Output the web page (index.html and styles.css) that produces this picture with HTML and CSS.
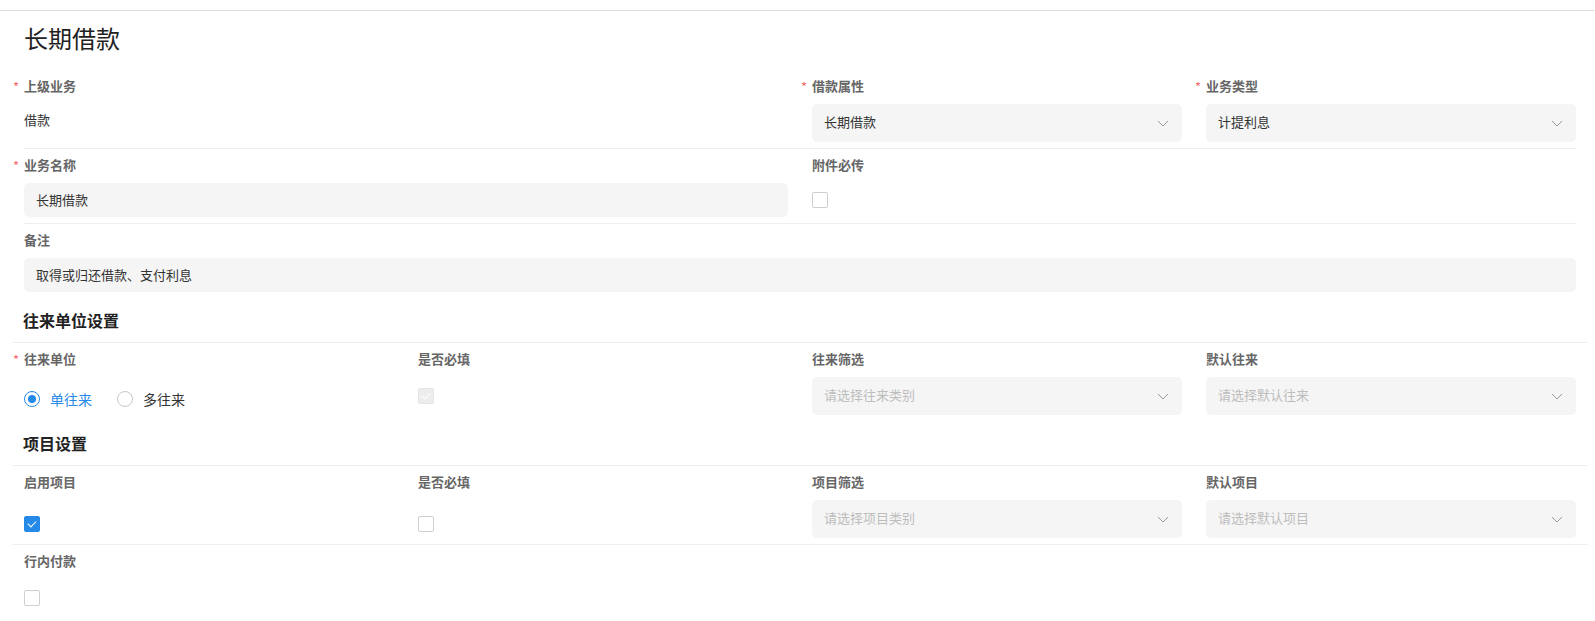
FILE: index.html
```html
<!DOCTYPE html>
<html lang="zh-CN">
<head>
	<meta charset="UTF-8">
	<title>长期借款</title>
	<link rel="stylesheet" href="styles.css">
</head>
<body>
	<div class="page">
		<div class="title">长期借款</div>

		<div class="base">
			<div class="row">
				<div class="item span-2">
					<div class="label required">上级业务</div>
					<div class="text-value">借款</div>
				</div>
				<div class="item">
					<div class="label required">借款属性</div>
					<div class="select">
						<span>长期借款</span>
						<svg class="arrow" width="12" height="7" viewBox="0 0 12 7"><polyline points="1,1 6,6 11,1"/></svg>
					</div>
				</div>
				<div class="item">
					<div class="label required">业务类型</div>
					<div class="select">
						<span>计提利息</span>
						<svg class="arrow" width="12" height="7" viewBox="0 0 12 7"><polyline points="1,1 6,6 11,1"/></svg>
					</div>
				</div>
			</div>
			<div class="row">
				<div class="item span-2">
					<div class="label required">业务名称</div>
					<div class="input">长期借款</div>
				</div>
				<div class="item">
					<div class="label">附件必传</div>
					<div class="check-box short"><span class="check"></span></div>
				</div>
			</div>
			<div class="row no-line">
				<div class="item span-4">
					<div class="label">备注</div>
					<div class="input">取得或归还借款、支付利息</div>
				</div>
			</div>
		</div>

		<div class="section">
			<div class="section-title">往来单位设置</div>
			<div class="row no-line">
				<div class="item">
					<div class="label required">往来单位</div>
					<div class="radio-group">
						<label class="radio on"><span class="dot"></span>单往来</label>
						<label class="radio"><span class="dot"></span>多往来</label>
					</div>
				</div>
				<div class="item">
					<div class="label">是否必填</div>
					<div class="check-box"><span class="check disabled"></span></div>
				</div>
				<div class="item">
					<div class="label">往来筛选</div>
					<div class="select empty">
						<span>请选择往来类别</span>
						<svg class="arrow" width="12" height="7" viewBox="0 0 12 7"><polyline points="1,1 6,6 11,1"/></svg>
					</div>
				</div>
				<div class="item">
					<div class="label">默认往来</div>
					<div class="select empty">
						<span>请选择默认往来</span>
						<svg class="arrow" width="12" height="7" viewBox="0 0 12 7"><polyline points="1,1 6,6 11,1"/></svg>
					</div>
				</div>
			</div>
		</div>

		<div class="section">
			<div class="section-title">项目设置</div>
			<div class="row">
				<div class="item">
					<div class="label">启用项目</div>
					<div class="check-box low"><span class="check checked"></span></div>
				</div>
				<div class="item">
					<div class="label">是否必填</div>
					<div class="check-box low"><span class="check"></span></div>
				</div>
				<div class="item">
					<div class="label">项目筛选</div>
					<div class="select empty">
						<span>请选择项目类别</span>
						<svg class="arrow" width="12" height="7" viewBox="0 0 12 7"><polyline points="1,1 6,6 11,1"/></svg>
					</div>
				</div>
				<div class="item">
					<div class="label">默认项目</div>
					<div class="select empty">
						<span>请选择默认项目</span>
						<svg class="arrow" width="12" height="7" viewBox="0 0 12 7"><polyline points="1,1 6,6 11,1"/></svg>
					</div>
				</div>
			</div>
			<div class="row no-line">
				<div class="item">
					<div class="label">行内付款</div>
					<div class="check-box"><span class="check"></span></div>
				</div>
			</div>
		</div>
	</div>
</body>
</html>
```

FILE: styles.css
```css
body{
	margin: 0;
	padding-top: 10px;
	background: #fff;
	font-family: "Noto Sans CJK SC", "Noto Sans", sans-serif;
	font-size: 13px;
	color: #333;
}
.page{
	border-top: 1px solid #dedede;
	padding: 0 7px 0 12px;
}
.title{
	padding: 11px 0 0 12px;
	font-size: 24px;
	line-height: 32px;
	color: #222;
}
.base{
	margin: 16px 12px 0;
}
.row{
	display: grid;
	grid-template-columns: repeat(4, 1fr);
	column-gap: 24px;
	padding: 8px 0 6px;
	border-bottom: 1px solid #efefef;
}
.row.no-line{
	border-bottom: none;
}
.section .row{
	padding: 8px 12px 6px;
}
.item{
	min-width: 0;
}
.span-2{
	grid-column: span 2;
}
.span-4{
	grid-column: span 4;
}
.label{
	position: relative;
	height: 20px;
	line-height: 16px;
	margin-bottom: 6px;
	font-weight: bold;
	color: #666;
}
.label.required::before{
	content: "*";
	position: absolute;
	left: -11px;
	top: 1px;
	color: #f56c6c;
	font-weight: normal;
	font-size: 13px;
}
.text-value{
	height: 38px;
	line-height: 32px;
}
.select{
	display: flex;
	align-items: center;
	justify-content: space-between;
	height: 38px;
	padding: 0 13px 0 12px;
	background: #f5f5f5;
	border-radius: 5px;
}
.select span{
	margin-top: -3px;
}
.select.empty span{
	color: #bdbdbd;
}
.arrow polyline{
	fill: none;
	stroke: #9a9a9a;
	stroke-width: 1;
}
.input{
	height: 34px;
	line-height: 34px;
	padding: 0 12px;
	background: #f5f5f5;
	border-radius: 5px;
}
.section-title{
	padding: 11px 0 9px 11px;
	font-size: 16px;
	line-height: 22px;
	height: 24px;
	font-weight: bold;
	color: #222;
	border-bottom: 1px solid #efefef;
}
.radio-group{
	display: flex;
	align-items: center;
	height: 38px;
	padding-top: 6px;
	box-sizing: border-box;
	font-size: 14px;
}
.radio{
	display: flex;
	align-items: center;
	margin-right: 25px;
	color: #333;
}
.radio .dot{
	position: relative;
	width: 14px;
	height: 14px;
	margin-right: 10px;
	border: 1px solid #c8c8c8;
	border-radius: 50%;
}
.radio.on{
	color: #2589e8;
}
.radio.on .dot{
	border-color: #2589e8;
}
.radio.on .dot::after{
	content: "";
	position: absolute;
	left: 3px;
	top: 3px;
	width: 8px;
	height: 8px;
	border-radius: 50%;
	background: #2589e8;
}
.check-box{
	display: flex;
	align-items: center;
	height: 38px;
}
.check-box.short{
	height: 34px;
}
.check-box.low{
	padding-top: 9px;
	box-sizing: border-box;
}
.check{
	position: relative;
	width: 14px;
	height: 14px;
	border: 1px solid #cfcfcf;
	border-radius: 2px;
	background: #fff;
}
.check.checked{
	background: #2589e8;
	border-color: #2589e8;
}
.check.disabled{
	background: #ededed;
	border-color: #e4e4e4;
}
.check.checked::after,
.check.disabled::after{
	content: "";
	position: absolute;
	left: 3px;
	top: 2px;
	width: 7px;
	height: 4px;
	border-left: 1.5px solid #fff;
	border-bottom: 1.5px solid #fff;
	transform: rotate(-45deg) translate(-1px, 1px);
}
```
